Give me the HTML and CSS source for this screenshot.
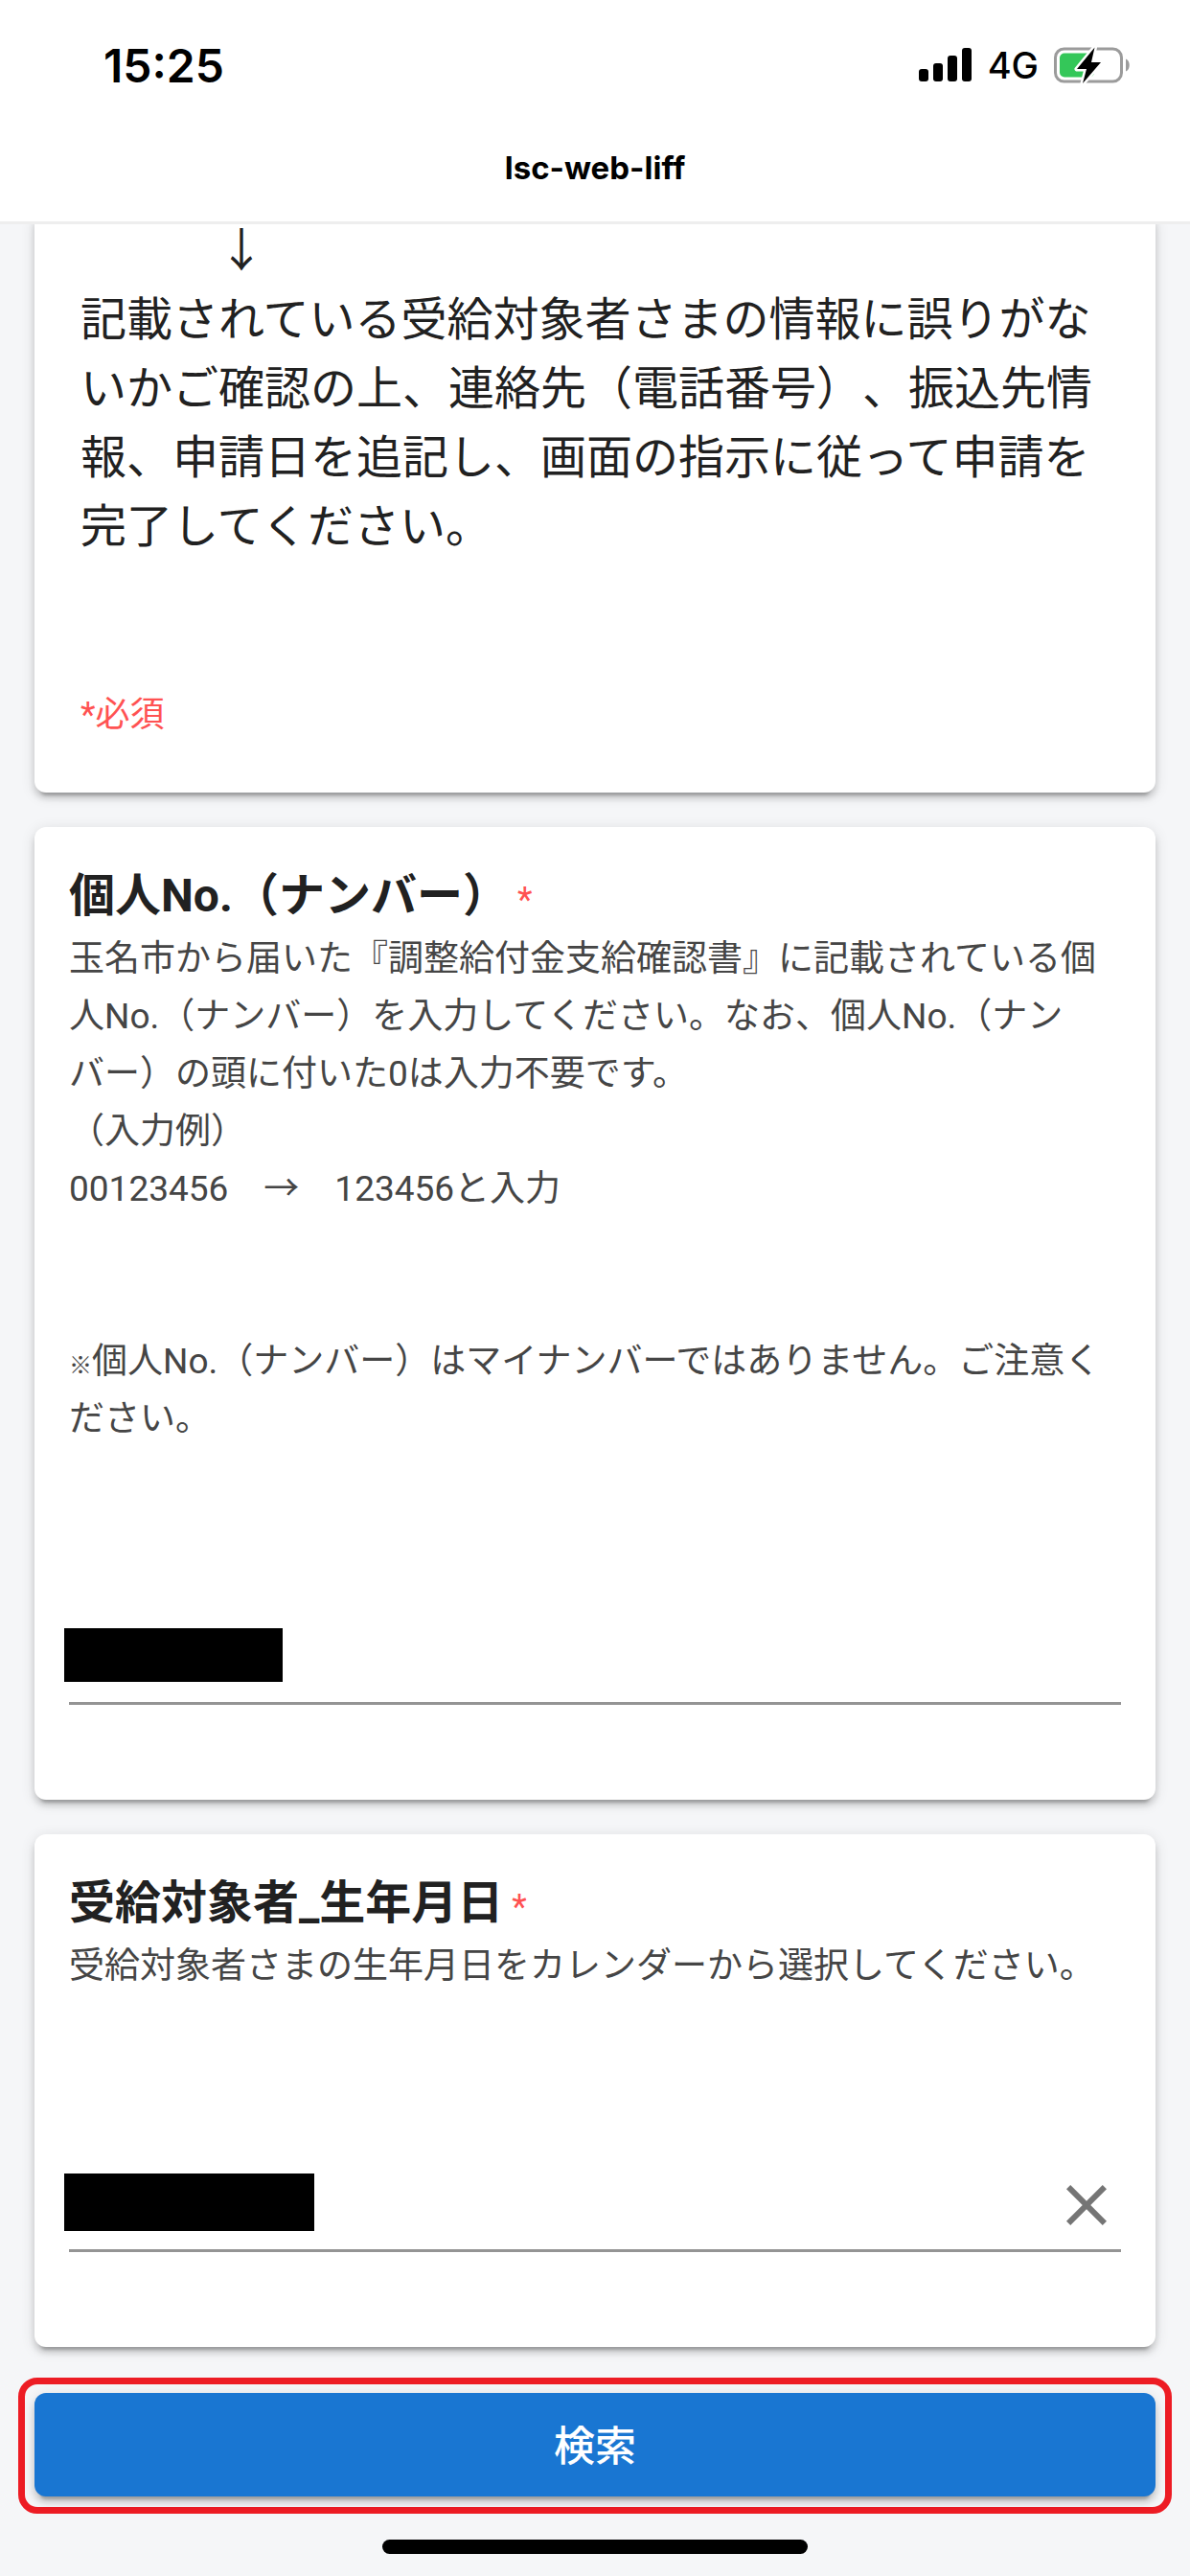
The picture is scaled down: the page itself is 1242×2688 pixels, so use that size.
FILE: index.html
```
<!DOCTYPE html>
<html lang="ja">
<head>
  <meta charset="UTF-8">
  <meta name="viewport" content="width=device-width, initial-scale=1.0">
  <title>lsc-web-liff</title>
  <link rel="stylesheet" href="styles.css">
</head>
<body>
  <header class="app-header">
    <div class="status-bar">
      <span class="clock">15:25</span>
      <div class="indicators">
        <svg class="signal" viewBox="0 0 56 36" aria-hidden="true">
          <rect x="0" y="22" width="10" height="13" rx="3" />
          <rect x="15" y="16" width="10" height="19" rx="3" />
          <rect x="30" y="8" width="10" height="27" rx="3" />
          <rect x="45" y="0" width="10" height="35" rx="3" />
        </svg>
        <span class="network">4G</span>
        <svg class="battery" viewBox="0 0 80 40" aria-hidden="true">
          <rect x="1.5" y="3" width="69" height="34" rx="9" fill="none" stroke="#9b9b9b" stroke-width="3" />
          <path d="M75 13.500c5 2 5 11 0 13z" fill="#9b9b9b" />
          <rect x="6" y="7.500" width="36" height="25" rx="5" fill="#34c759" />
          <path d="M42.500 1.500 24 24h10l-4 15L49 17H39z" fill="#000" stroke="#fff" stroke-width="5" stroke-linejoin="round" paint-order="stroke" />
        </svg>
      </div>
    </div>
    <h1 class="app-title">lsc-web-liff</h1>
  </header>

  <main class="content">
    <section class="card intro">
      <p class="intro-text">　　　↓<br>記載されている受給対象者さまの情報に誤りがないかご確認の上、連絡先（電話番号）、振込先情報、申請日を追記し、画面の指示に従って申請を完了してください。</p>
      <p class="required-note">*必須</p>
    </section>

    <form class="search-form">
      <section class="card">
        <h2 class="question"><label for="personal-no">個人No.（ナンバー）</label><span class="required">*</span></h2>
        <p class="description">玉名市から届いた『調整給付金支給確認書』に記載されている個人No.（ナンバー）を入力してください。なお、個人No.（ナンバー）の頭に付いた0は入力不要です。<br>（入力例）<br>00123456　→　123456と入力</p>
        <p class="description note"><span class="note-mark">※</span>個人No.（ナンバー）はマイナンバーではありません。ご注意ください。</p>
        <div class="field">
          <input type="text" id="personal-no" inputmode="numeric">
          <span class="mask mask-no"></span>
        </div>
      </section>

      <section class="card">
        <h2 class="question"><label for="birthday">受給対象者_生年月日</label><span class="required">*</span></h2>
        <p class="description">受給対象者さまの生年月日をカレンダーから選択してください。</p>
        <div class="field">
          <input type="text" id="birthday" readonly>
          <span class="mask mask-date"></span>
          <button type="button" class="clear" aria-label="クリア">
            <svg viewBox="0 0 24 24" aria-hidden="true"><path d="M19 6.410 17.590 5 12 10.590 6.410 5 5 6.410 10.590 12 5 17.590 6.410 19 12 13.410 17.590 19 19 17.590 13.410 12z" /></svg>
          </button>
        </div>
      </section>

      <div class="submit-area">
        <button type="submit" class="submit">検索</button>
      </div>
    </form>
  </main>

  <div class="home-indicator"></div>
</body>
</html>
```

FILE: styles.css
```
* { box-sizing: border-box; }

body {
  margin: 0;
  background: #f5f6f8;
  color: #212121;
  font-family: Roboto, "Noto Sans CJK JP", sans-serif;
  line-break: strict;
  text-spacing-trim: space-all;
}

h1, h2, p { margin: 0; }

/* header */
.app-header {
  position: sticky;
  top: 0;
  z-index: 10;
  background: #fff;
  border-bottom: 3px solid #eee;
  color: #000;
  font-family: Inter, sans-serif;
}
.status-bar {
  display: flex;
  align-items: center;
  justify-content: space-between;
  height: 136px;
  padding: 0 62px 0 108px;
}
.clock { font-size: 48px; font-weight: 600; }
.indicators { display: flex; align-items: center; gap: 16px; }
.signal { width: 56px; height: 36px; }
.network { font-size: 38px; font-weight: 500; }
.battery { width: 80px; height: 40px; }
.app-title {
  padding-bottom: 16px;
  font-size: 33px;
  font-weight: 700;
  line-height: 79px;
  text-align: center;
}

/* cards */
.content { padding: 0 36px; }
.card {
  margin-bottom: 36px;
  padding: 36px 36px 99px;
  border-radius: 12px;
  background: #fff;
  box-shadow: 0 9px 3px -6px rgba(0, 0, 0, .2),
              0 6px 6px 0 rgba(0, 0, 0, .14),
              0 3px 15px 0 rgba(0, 0, 0, .12);
}
.intro {
  margin-top: -12px; /* scrolled under the header */
  padding: 4px 48px 51px;
}
.intro-text { font-size: 48px; line-height: 72px; }
.required-note {
  margin-top: 130px;
  color: #ff5252;
  font-size: 36px;
  line-height: 60px;
}
.question { font-size: 48px; font-weight: 700; line-height: 72px; }
.required {
  margin-left: 9px;
  color: #ff5252;
  font-size: 36px;
  font-weight: 400;
  line-height: 1;
}
.description {
  color: #454545;
  font-size: 37px;
  line-height: 60px;
}
.note { margin-top: 120px; }
.note-mark { font-size: 24px; font-weight: 700; line-height: 1; }

/* fields */
.field {
  position: relative;
  display: flex;
  align-items: center;
  height: 96px;
  margin-top: 172px;
  border-bottom: 3px solid #949494;
}
.field input {
  flex: 1;
  min-width: 0;
  height: 72px;
  padding: 0;
  border: 0;
  outline: 0;
  background: none;
  font: inherit;
  font-size: 48px;
}
.mask { position: absolute; left: -5px; background: #000; }
.mask-no { top: 16px; width: 228px; height: 56px; }
.mask-date { top: 14px; width: 261px; height: 60px; }
.clear {
  width: 72px;
  height: 72px;
  padding: 0;
  border: 0;
  background: none;
}
.clear svg { display: block; fill: #757575; }

/* submit */
.submit-area {
  margin: -4px -17px 0;
  padding: 9px 10px 11px;
  border: 7px solid #ed1c24;
  border-radius: 20px;
}
.submit {
  display: block;
  width: 100%;
  height: 108px;
  padding: 0 0 4px;
  border: 0;
  border-radius: 12px;
  background: #1976d2;
  color: #fff;
  font-family: inherit;
  font-size: 43px;
  font-weight: 500;
  box-shadow: 0 9px 3px -6px rgba(0, 0, 0, .2),
              0 6px 6px 0 rgba(0, 0, 0, .14),
              0 3px 15px 0 rgba(0, 0, 0, .12);
}

.home-indicator {
  width: 444px;
  height: 15px;
  margin: 27px auto 0;
  border-radius: 8px;
  background: #000;
}
```
